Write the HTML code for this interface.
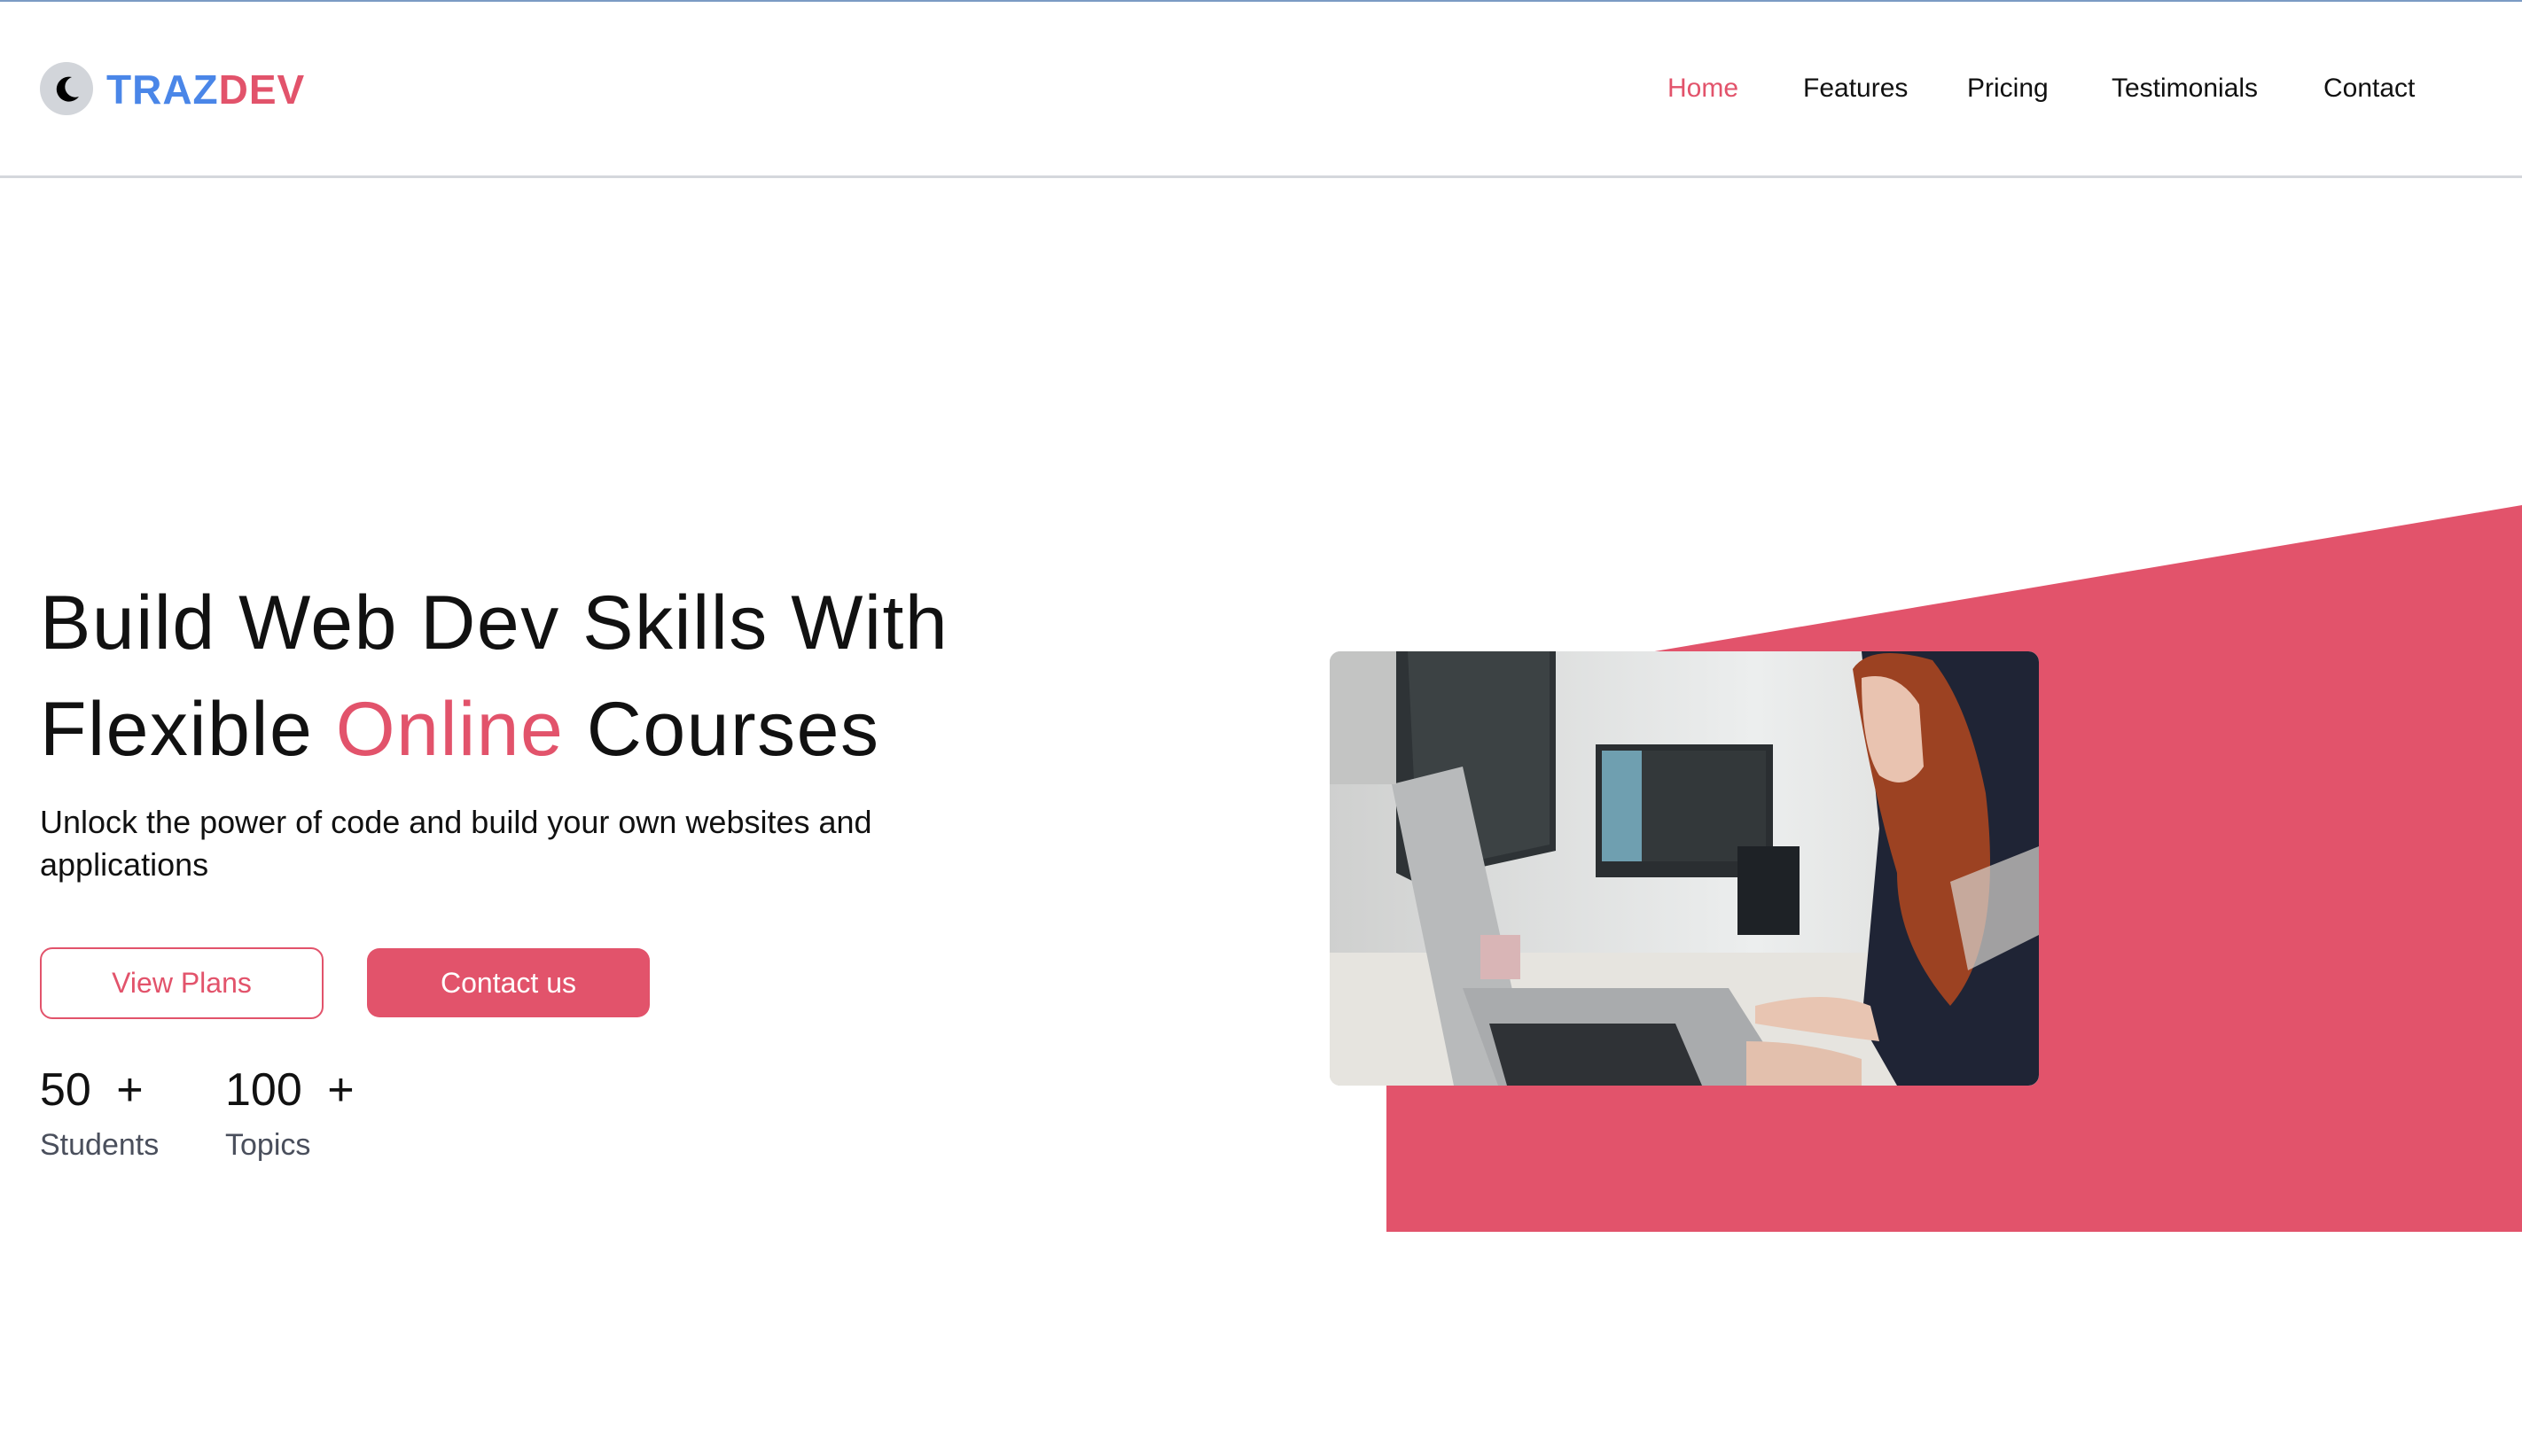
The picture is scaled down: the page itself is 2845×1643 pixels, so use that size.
<!DOCTYPE html>
<html><head><meta charset="utf-8"><style>
*{margin:0;padding:0;box-sizing:border-box}
body{width:2845px;height:1643px;background:#fff;font-family:"Liberation Sans",sans-serif;position:relative;overflow:hidden;color:#111}
.top{position:absolute;left:0;top:0;width:100%;height:2px;background:#7b9bc4}
.hdr{position:absolute;left:0;top:198px;width:100%;height:3px;background:#d4d7dc}
.logoc{position:absolute;left:45px;top:70px;width:60px;height:60px;border-radius:50%;background:#d2d5da}
.brand{position:absolute;left:120px;top:73px;font-size:46px;font-weight:bold;letter-spacing:1px;line-height:56px}
.nav a{position:absolute;top:82px;font-size:30px;color:#111;text-decoration:none;line-height:36px}
h1{position:absolute;left:45px;top:643px;font-weight:normal;font-size:86px;line-height:120px;letter-spacing:1.5px;color:#111;width:1300px}
.pink{color:#e2536b}
p.sub{position:absolute;left:45px;top:904px;font-size:36px;line-height:48px;width:1050px}
.b1{position:absolute;left:45px;top:1069px;width:320px;height:81px;border:2px solid #e2536b;border-radius:14px;color:#e2536b;font-size:32px;text-align:center;line-height:77px}
.b2{position:absolute;left:414px;top:1070px;width:319px;height:78px;background:#e2536b;border-radius:14px;color:#fff;font-size:32px;text-align:center;line-height:78px}
.n{position:absolute;top:1198px;font-size:52px;line-height:64px;word-spacing:14px}
.l{position:absolute;top:1273px;font-size:34px;color:#4a4f5c}
.photo{position:absolute;left:1500px;top:735px;width:800px;height:490px;border-radius:12px;overflow:hidden;background:#dcdcdc}
</style></head><body>
<div class="top"></div>
<div class="logoc"><svg width="60" height="60" viewBox="0 0 60 60"><path d="M36 17 A14 14 0 1 0 44 39 A11 11 0 0 1 36 17Z" fill="#000"/></svg></div>
<div class="brand"><span style="color:#4a86e8">TRAZ</span><span style="color:#e2536b">DEV</span></div>
<div class="nav">
<a style="left:1881px;color:#e2536b">Home</a>
<a style="left:2034px">Features</a>
<a style="left:2219px">Pricing</a>
<a style="left:2382px">Testimonials</a>
<a style="left:2621px">Contact</a>
</div>
<div class="hdr"></div>
<h1>Build Web Dev Skills With<br>Flexible <span class="pink">Online</span> Courses</h1>
<p class="sub">Unlock the power of code and build your own websites and applications</p>
<div class="b1">View Plans</div>
<div class="b2">Contact us</div>
<div class="n" style="left:45px">50 +</div>
<div class="n" style="left:254px">100 +</div>
<div class="l" style="left:45px">Students</div>
<div class="l" style="left:254px">Topics</div>
<svg style="position:absolute;left:0;top:0" width="2845" height="1643"><polygon points="1564,786 2845,570 2845,1390 1564,1390" fill="#e2536b"/></svg>
<div class="photo">
<svg width="800" height="490" viewBox="0 0 800 490">
<defs><linearGradient id="bg" x1="0" x2="1"><stop offset="0" stop-color="#cfd0cf"/><stop offset=".6" stop-color="#eceeee"/><stop offset="1" stop-color="#d8d8d6"/></linearGradient></defs>
<rect width="800" height="490" fill="url(#bg)"/>
<rect x="0" y="340" width="800" height="150" fill="#e6e4df"/>
<polygon points="75,0 255,0 255,225 95,260 75,250" fill="#2e3336"/>
<polygon points="88,0 248,0 248,218 100,250" fill="#3c4244"/>
<rect x="300" y="105" width="200" height="150" fill="#2a2e31"/>
<rect x="307" y="112" width="45" height="125" fill="#6f9fb0"/>
<rect x="352" y="112" width="140" height="125" fill="#33383a"/>
<rect x="460" y="220" width="70" height="100" fill="#1e2226"/>
<polygon points="70,150 150,130 230,490 140,490" fill="#b8babb"/>
<polygon points="150,380 450,380 520,490 190,490" fill="#a9abad"/>
<polygon points="180,420 390,420 420,490 200,490" fill="#2f3236"/>
<rect x="170" y="320" width="45" height="50" fill="#d9b5b6"/>
<path d="M600 0 L800 0 L800 490 L640 490 L600 420 L620 200 Z" fill="#1f2435"/>
<path d="M590 20 Q610 -10 680 10 Q720 60 740 160 Q760 330 700 400 Q640 330 640 250 Q610 150 590 20Z" fill="#9c4222"/>
<path d="M600 30 Q640 20 665 60 L670 130 Q650 160 620 140 Q600 110 600 30Z" fill="#e9c3b0"/>
<path d="M700 260 L800 220 L800 320 L720 360Z" fill="#d8d6d0" opacity=".7"/>
<path d="M480 400 Q560 380 610 400 L620 440 Q540 430 480 420Z" fill="#e8c5b2"/>
<path d="M470 440 Q540 440 600 460 L600 490 L470 490Z" fill="#e3c0ad"/>
<rect x="0" y="0" width="75" height="150" fill="#c3c4c3"/>
</svg>
</div>
</body></html>
